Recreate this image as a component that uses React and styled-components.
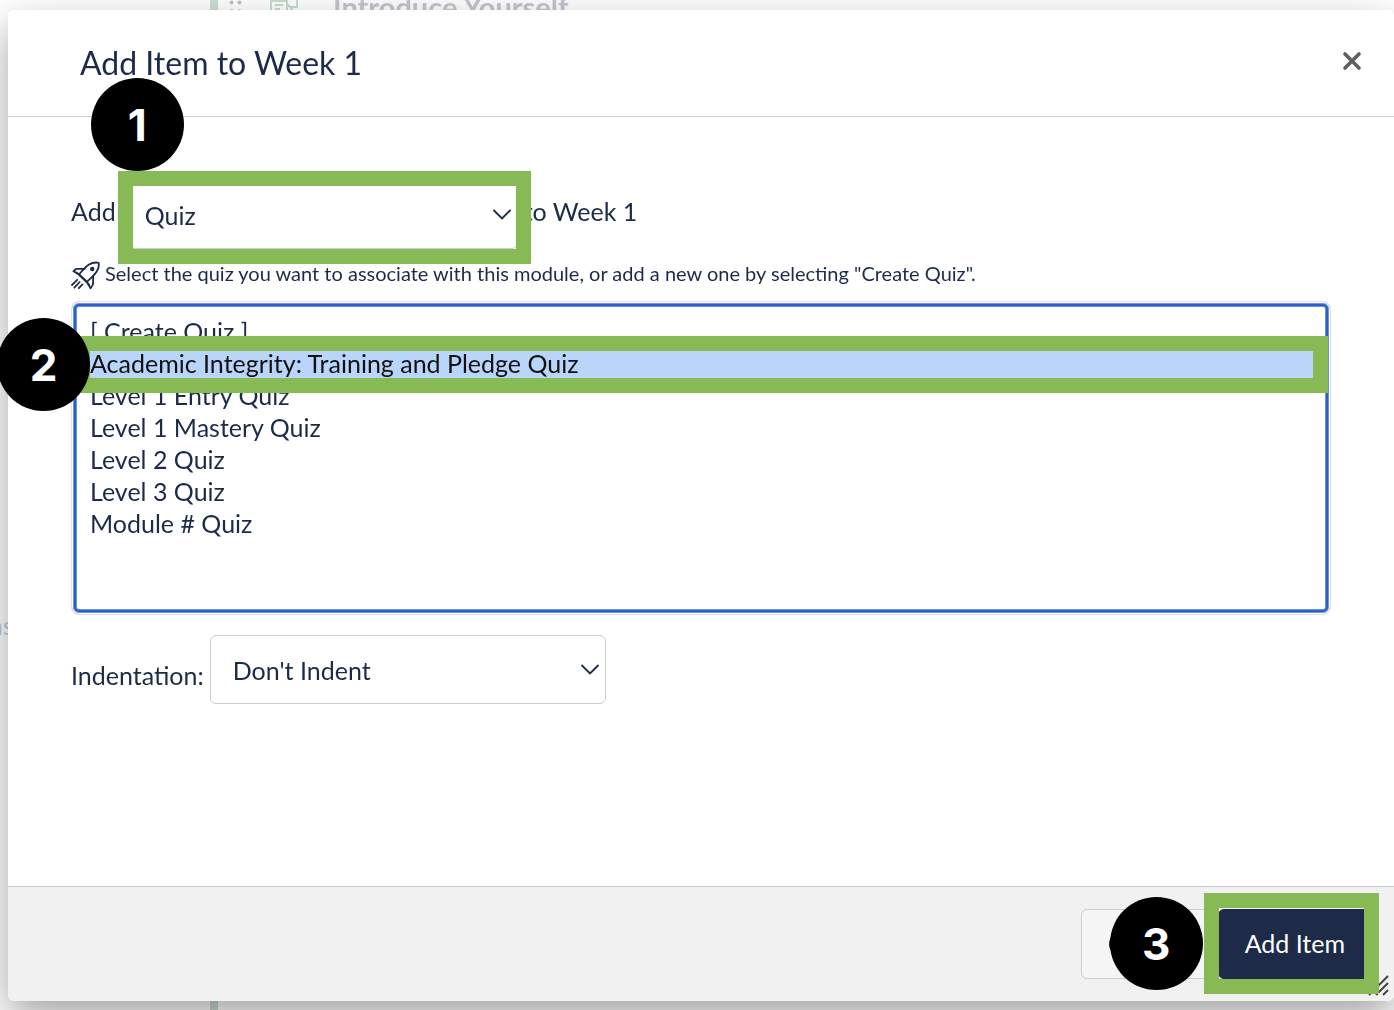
import React, { useState } from 'react';
import styled, { createGlobalStyle } from 'styled-components';

const GlobalStyle = createGlobalStyle`
  * {
    box-sizing: border-box;
  }

  body {
    margin: 0;
    background: #fff;
    color: #1d2b48;
    font-family: Lato, "Liberation Sans", sans-serif;
    font-size: 25px;
    line-height: 32px;
  }
`

const Page = styled.div`
  display: flex;
  min-height: 100vh;
  padding: 10px 0 9px 8px;
  overflow: hidden;
`

const CoursePage = styled.div`
  position: fixed;
  inset: 0;
  display: flex;
  overflow: hidden;
`

const CourseNav = styled.nav`
  flex: 0 0 210px;
  display: flex;
  flex-direction: column;
  justify-content: center;
  padding-top: 240px;
`

const NavLink = styled.a`
  margin-left: -11px;
  color: #bccfe2;
  text-decoration: none;
`

const ModuleItem = styled.div`
  flex: 1;
  display: flex;
  align-items: flex-start;
  border-left: 8px solid #cbdfd2;
  color: #c4c6cf;
  font-size: 29px;
  font-weight: bold;
`

const ItemIcon = styled.svg`
  flex: none;
  margin-left: ${props => props.$gap};
`

const ItemTitle = styled.span`
  margin: -9px 0 0 34px;
`

const Dialog = styled.section`
  position: relative;
  flex: 1;
  display: flex;
  flex-direction: column;
  border-radius: 6px;
  background: #fff;
  box-shadow: 0 16px 40px rgba(0, 0, 0, 0.36);
`

const Header = styled.header`
  display: flex;
  align-items: center;
  justify-content: space-between;
  padding: 32px 32px 32px 72px;
  border-bottom: 1px solid #c7cdd1;
`

const Title = styled.h2`
  margin: 0;
  font-size: 32px;
  line-height: 42px;
  font-weight: normal;
`

const CloseButton = styled.button`
  display: flex;
  padding: 0;
  margin-bottom: 4px;
  border: none;
  background: none;
`

const Form = styled.form`
  flex: 1;
  display: flex;
  flex-direction: column;
  padding: 63px 63px 32px;
`

const Row = styled.div`
  display: flex;
  align-items: center;
  gap: 6px;
`

const RowText = styled.label`
  padding-top: ${props => props.$low ? '10px' : '0'};
  padding-bottom: ${props => props.$low ? '0' : '8px'};
`

const SelectBox = styled.div`
  position: relative;
  width: 396px;
`

const Select = styled.select`
  display: block;
  width: 100%;
  height: 69px;
  padding: 1px 40px 0 22px;
  border: 1px solid #c7cdd1;
  border-radius: 6px;
  background: #fff;
  color: inherit;
  font: inherit;
  appearance: none;
`

const Chevron = styled.svg`
  position: absolute;
  top: 28px;
  right: 6px;
  pointer-events: none;
`

const Help = styled.p`
  display: flex;
  align-items: flex-start;
  gap: 5px;
  margin: 12px 0 11px;
  font-size: 20px;
  line-height: 24px;
`

const ListBox = styled.div`
  position: relative;
`

const List = styled.select`
  display: block;
  width: 100%;
  height: 314px;
  padding: 14px 12px 14px 16px;
  border: 1px solid #e2e2e4;
  border-radius: 8px;
  outline: none;
  background: #fff;
  box-shadow:
    inset 0 0 0 1px #fff,
    inset 0 0 0 2px #6d93dc,
    inset 0 0 0 4px #2a5fc9,
    inset 0 0 0 5px #6d93dc;
  color: inherit;
  font: inherit;
  overflow: hidden;

  option {
    height: 32px;
    padding: 0 2px;
  }

  option:checked {
    background-image: linear-gradient(#b9d5fa, #b9d5fa);
  }
`

const IndentRow = styled(Row)`
  margin-top: 20px;
`

const Footer = styled.footer`
  display: flex;
  justify-content: flex-end;
  gap: 9px;
  padding: 22px;
  border-top: 1px solid #c7cdd1;
  border-radius: 0 0 6px 6px;
  background: #f1f1f1;
`

const Button = styled.button`
  height: 70px;
  padding: 0 26px 2px;
  border: 1px solid ${props => props.$primary ? '#1d2b48' : '#c7cdd1'};
  border-radius: 6px;
  background: ${props => props.$primary ? '#1d2b48' : '#f5f5f5'};
  color: ${props => props.$primary ? '#fff' : '#1d2b48'};
  font: inherit;
`

const ButtonBox = styled.div`
  position: relative;
`

const ResizeGrip = styled.svg`
  position: absolute;
  right: 5px;
  bottom: 5px;
`

// green frame laid over a control, inset is given as top right bottom left
const Highlight = styled.div`
  position: absolute;
  inset: ${props => props.$inset};
  border: 15px solid #87b955;
  pointer-events: none;
`

const Step = styled.span`
  position: absolute;
  top: ${props => props.$top};
  left: ${props => props.$left};
  display: flex;
  align-items: center;
  justify-content: center;
  width: 93px;
  height: 93px;
  border-radius: 50%;
  background: #000;
  color: #fff;
  font: bold 44px Inter, "Liberation Sans", sans-serif;
  pointer-events: none;
`

const quizzes = [
  '[ Create Quiz ]',
  'Academic Integrity: Training and Pledge Quiz',
  'Level 1 Entry Quiz',
  'Level 1 Mastery Quiz',
  'Level 2 Quiz',
  'Level 3 Quiz',
  'Module # Quiz'
];

function Arrow () {
  return (
    <Chevron width="20" height="13" viewBox="0 0 20 13" fill="none" stroke="#1d2b48" strokeWidth="1.8">
      <path d="M2 2.5 L10 10.5 L18 2.5" strokeLinecap="round" />
    </Chevron>
  );
}

function Rocket () {
  return (
    <svg width="29" height="29" viewBox="0 0 29 29" fill="none" stroke="#1d2b48" strokeWidth="1.8" strokeLinejoin="round" strokeLinecap="round">
      <path d="M8 13.5 C11 10 14.5 6 18 3.6 C21 1.8 25 1.2 27.6 1.8 C28.2 4.6 27.6 8 25.4 11 C22.6 14.8 18.8 18.2 15.8 21 Z" />
      <path d="M13.6 7.8 L5.4 7.8 L2.4 10.2 L8 13.5 M22.2 15 L22 23.4 L19.6 27.4 L15.8 21" />
      <path d="M5.4 11.4 L8 13.5 L15.8 21 L18.4 24" />
      <circle cx="21.2" cy="8" r="1.3" fill="#1d2b48" />
      <path d="M6.2 18.8 L1 24 M8.6 21 L3.4 26.6 M11.4 23.4 L7.8 27.2" />
    </svg>
  );
}

function App () {
  const [type, setType] = useState('Quiz');
  const [quiz, setQuiz] = useState(quizzes[1]);
  const [indent, setIndent] = useState("Don't Indent");

  return (
    <Page>
      <GlobalStyle />
      <CoursePage>
        <CourseNav>
          <NavLink href="#">ns</NavLink>
        </CourseNav>
        <ModuleItem>
          <ItemIcon $gap="11px" width="14" height="12" viewBox="0 0 14 12" fill="#c0c2cc">
            <circle cx="2.5" cy="2.5" r="2" />
            <circle cx="10.5" cy="2.5" r="2" />
            <circle cx="2.5" cy="11" r="2" />
            <circle cx="10.5" cy="11" r="2" />
          </ItemIcon>
          <ItemIcon $gap="26px" width="30" height="14" viewBox="0 0 30 14" fill="none" stroke="#c6ddce" strokeWidth="2">
            <path d="M2 14 V1 H18 V14 M6 5 H14 M6 9 H11 M18 4 L23 9 V7 H28 V0" />
          </ItemIcon>
          <ItemTitle>Introduce Yourself</ItemTitle>
        </ModuleItem>
      </CoursePage>

      <Dialog role="dialog" aria-labelledby="dialog-title">
        <Header>
          <Title id="dialog-title">Add Item to Week 1</Title>
          <CloseButton type="button" aria-label="Close">
            <svg width="20" height="20" viewBox="0 0 20 20" stroke="#5f5f5f" strokeWidth="3.6" strokeLinecap="round">
              <path d="M3 3 L17 17 M17 3 L3 17" />
            </svg>
          </CloseButton>
        </Header>

        <Form id="add-item" onSubmit={e => e.preventDefault()}>
          <Row>
            <RowText htmlFor="type">Add</RowText>
            <SelectBox>
              <Select id="type" value={type} onChange={e => setType(e.target.value)}>
                <option>Quiz</option>
              </Select>
              <Arrow />
              <Highlight $inset="-9px -13px -15px -4px" />
              <Step $top="-102px" $left="-31px">1</Step>
            </SelectBox>
            <RowText htmlFor="type">to Week 1</RowText>
          </Row>

          <Help>
            <Rocket />
            <label htmlFor="quiz">
              Select the quiz you want to associate with this module, or add a new one by selecting "Create Quiz".
            </label>
          </Help>

          <ListBox>
            <List id="quiz" size={9} value={quiz} onChange={e => setQuiz(e.target.value)}>
              {quizzes.map(name => <option key={name}>{name}</option>)}
            </List>
            <Highlight $inset="35px 3px 222px 4px" />
            <Step $top="17px" $left="-74px">2</Step>
          </ListBox>

          <IndentRow>
            <RowText $low htmlFor="indent">Indentation:</RowText>
            <SelectBox>
              <Select id="indent" value={indent} onChange={e => setIndent(e.target.value)}>
                <option>Don't Indent</option>
              </Select>
              <Arrow />
            </SelectBox>
          </IndentRow>
        </Form>

        <Footer>
          <ResizeGrip width="22" height="22" viewBox="0 0 22 22" stroke="#444" strokeWidth="2">
            <path d="M2 21 L21 2 M9 21 L21 9 M16 21 L21 16" />
          </ResizeGrip>
          <Button type="button">Cancel</Button>
          <ButtonBox>
            <Button $primary form="add-item">Add Item</Button>
            <Highlight $inset="-16px -7px -15px -14px" />
            <Step $top="-12px" $left="-108px">3</Step>
          </ButtonBox>
        </Footer>
      </Dialog>
    </Page>
  );
}

export default App;
